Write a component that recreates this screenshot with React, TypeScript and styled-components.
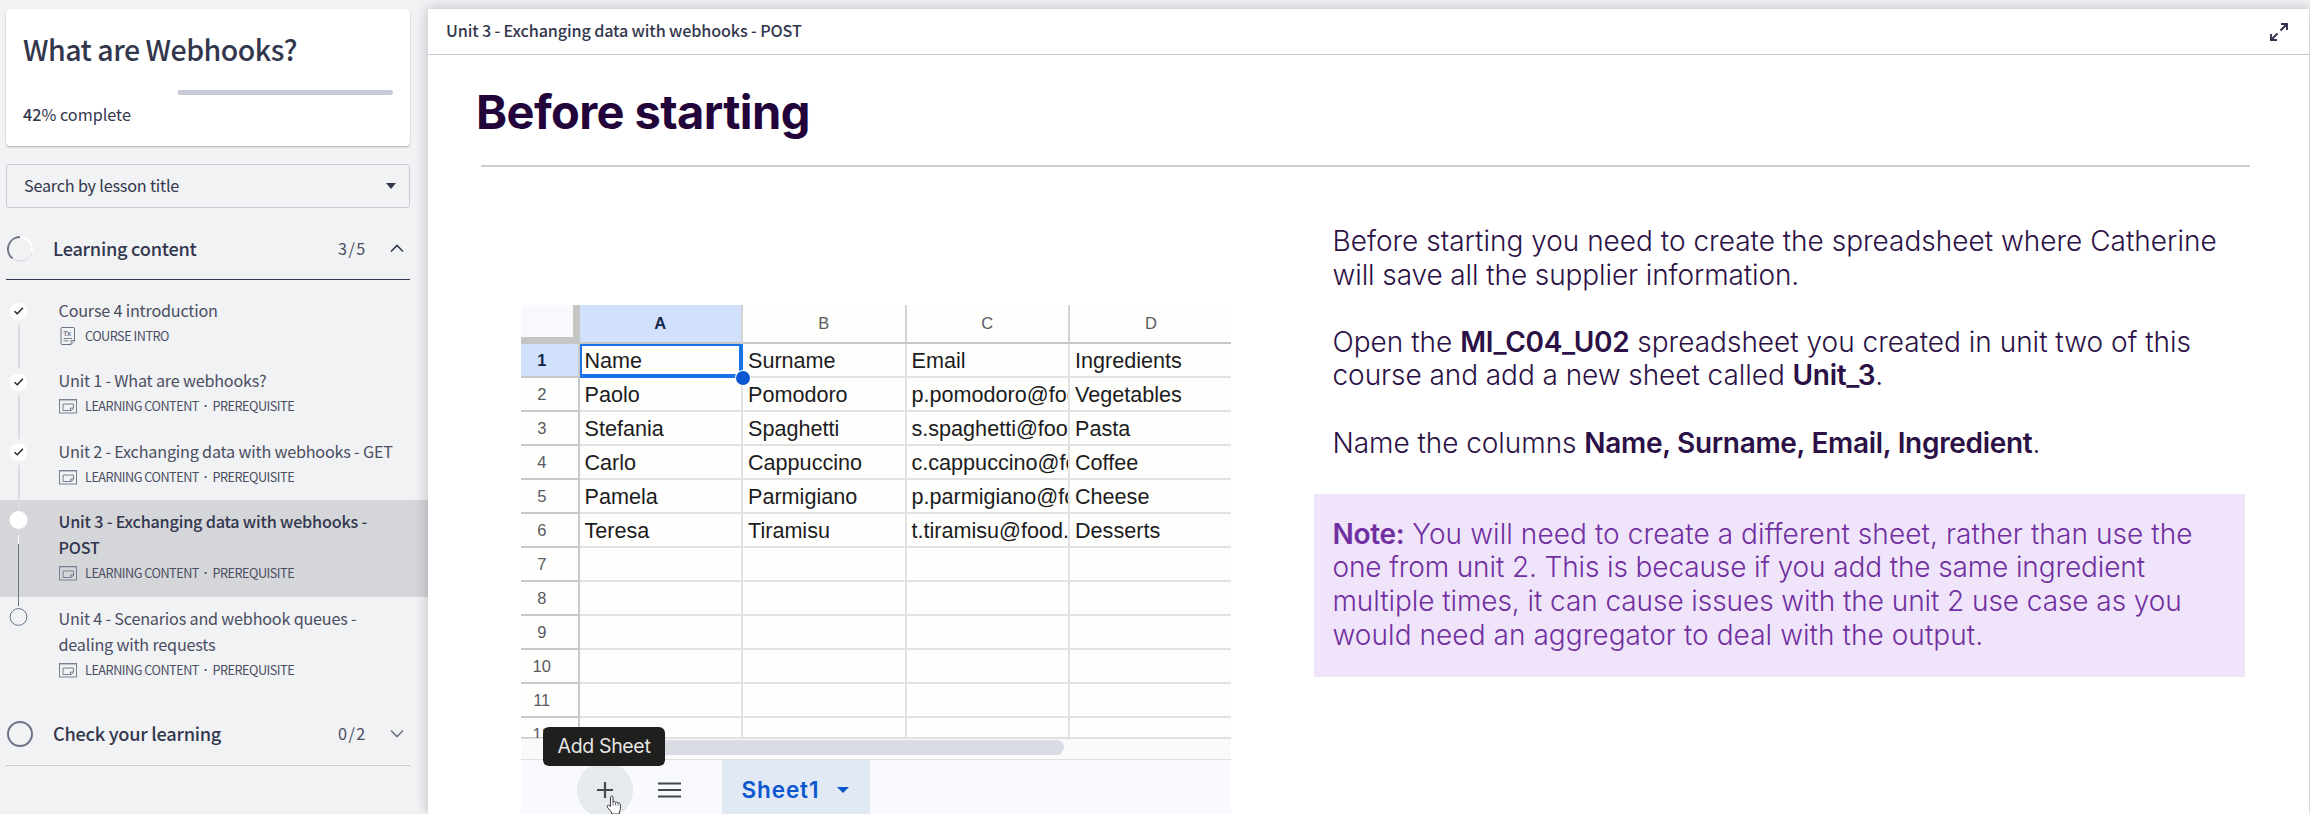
import React from "react";
import styled, { createGlobalStyle } from "styled-components";

const GlobalStyle = createGlobalStyle`
  * { box-sizing: border-box; }
  html, body { margin: 0; padding: 0; height: 814px; overflow: hidden; }
  body { background: #f1f2f4; font-family: "Noto Sans CJK SC", "Noto Sans", sans-serif; color: #33374d; }
  h1, h2, p { margin: 0; font-weight: inherit; }
`;

const Page = styled.div`
  display: flex;
  width: 2310px;
  height: 814px;
  overflow: hidden;
`;

/* ---------- Sidebar ---------- */

const Sidebar = styled.aside`
  width: 428px;
  flex: none;
  padding-top: 9px;
  display: flex;
  flex-direction: column;
`;

const CourseCard = styled.section`
  margin: 0 18px 0 6px;
  height: 137px;
  padding: 19px 17px 0 17px;
  background: #fff;
  border-radius: 4px;
  box-shadow: 0 1px 2px rgba(60, 75, 85, 0.4);
`;

const CourseTitle = styled.h1`
  font-size: 28.5px;
  line-height: 42px;
  font-weight: 500;
  letter-spacing: -0.5px;
  white-space: nowrap;
`;

const ProgressTrack = styled.div`
  display: flex;
  justify-content: flex-end;
  height: 5px;
  margin-top: 20px;
  border-radius: 3px;
  overflow: hidden;
`;

const ProgressRemaining = styled.div`
  width: 215px;
  background: #c8cbd6;
`;

const ProgressText = styled.p`
  margin-top: 6px;
  font-size: 16.2px;
  line-height: 26px;
  white-space: nowrap;
  b { font-weight: 500; }
`;

const SearchBox = styled.div`
  margin: 18px 18px 0 6px;
  height: 44px;
  padding: 0 13px 2px 17px;
  border: 1px solid #c7cad6;
  border-radius: 4px;
  display: flex;
  align-items: center;
  justify-content: space-between;
  font-size: 16.2px;
  line-height: 26px;
  letter-spacing: -0.2px;
  svg { position: relative; top: 1px; }
`;

const SectionHeader = styled.div<{ $open?: boolean }>`
  margin: ${(p) => (p.$open ? "10px 18px 8px 6px" : "10px 18px 0 6px")};
  height: 62px;
  border-bottom: 1px solid ${(p) => (p.$open ? "#33374d" : "#c8cacd")};
  display: flex;
  align-items: center;
`;

const SectionTitle = styled.h2`
  margin: -2px 0 0 19px;
  flex: 1;
  font-size: 18.2px;
  line-height: 28px;
  font-weight: 500;
  letter-spacing: -0.25px;
`;

const SectionCount = styled.span`
  width: 52px;
  margin-top: -2px;
  font-size: 16.2px;
  line-height: 28px;
  letter-spacing: 1.4px;
  color: #4b4e62;
`;

const Chevron = styled.svg`
  width: 14px;
  height: 9px;
  margin: -1px 6px 0 0;
  display: block;
`;

const Lesson = styled.div<{ $active?: boolean; $lines?: number }>`
  display: flex;
  height: ${(p) => (p.$lines === 2 ? 97 : 70.67)}px;
  background: ${(p) => (p.$active ? "#d5d6da" : "transparent")};
`;

const LessonRail = styled.svg`
  display: block;
  flex: none;
  width: 58.5px;
  height: 110px;
  overflow: visible;
  z-index: 1;
`;

const LessonBody = styled.div`
  padding-top: 8.5px;
`;

const LessonTitle = styled.div<{ $active?: boolean }>`
  font-size: 16.2px;
  line-height: 26px;
  letter-spacing: -0.2px;
  font-weight: ${(p) => (p.$active ? 500 : 400)};
  color: ${(p) => (p.$active ? "#33374d" : "#4b4e62")};
  white-space: pre;
`;

const LessonMeta = styled.div`
  display: flex;
  align-items: center;
  height: 26px;
  font-size: 12.7px;
  line-height: 26px;
  letter-spacing: -0.5px;
  color: #4b4e62;
  white-space: pre;
`;

const MetaDot = styled.span`
  width: 13.5px;
  text-align: center;
  font-family: "Liberation Sans", sans-serif;
  font-weight: 700;
`;

const MetaIcon = styled.svg`
  display: block;
  width: 18px;
  height: 20px;
  margin-right: 8.5px;
`;

/* ---------- Main panel ---------- */

const Panel = styled.main`
  flex: none;
  width: 1881px;
  height: 805px;
  margin-top: 9px;
  background: #fff;
  box-shadow: 0 0 12px rgba(30, 30, 40, 0.27);
`;

const PanelHeader = styled.header`
  height: 46px;
  padding: 0 21px 0 18px;
  border-bottom: 1px solid #c7c9d3;
  display: flex;
  align-items: center;
  justify-content: space-between;
  font-size: 16.2px;
  line-height: 26px;
`;

const PanelTitle = styled.span`
  margin-top: -4px;
  font-weight: 500;
  letter-spacing: -0.15px;
`;

const Slide = styled.div`
  padding: 27px 59px 0 51px;
`;

const SlideHeading = styled.h1`
  margin-left: -3px;
  font-family: Inter, sans-serif;
  font-weight: 700;
  font-size: 47px;
  line-height: 60px;
  letter-spacing: -0.6px;
  color: #22043a;
  white-space: nowrap;
`;

const Divider = styled.div`
  height: 2px;
  margin: 23px 0 0 2px;
  background: #d1cac9;
`;

const SlideColumns = styled.div`
  display: flex;
  align-items: flex-start;
`;

const Copy = styled.div`
  margin: 58px 0 0 83px;
  width: 931px;
  font-family: Inter, sans-serif;
  font-weight: 300;
  font-size: 28px;
  line-height: 33.6px;
  color: #2b1145;
  b { font-weight: 600; letter-spacing: -0.3px; }
`;

const Paragraph = styled.p`
  margin: 0 0 33.6px 18.5px;
  white-space: nowrap;
`;

const Note = styled.div`
  margin-top: 33px;
  height: 183px;
  padding: 24px 0 0 18.5px;
  background: #f0e4fb;
  color: #7030a0;
  white-space: nowrap;
`;

const Line = styled.span<{ $spacing?: number }>`
  display: block;
  letter-spacing: ${(p) => p.$spacing ?? 0}px;
`;

/* ---------- Spreadsheet ---------- */

const Sheet = styled.div`
  position: relative;
  margin: 138px 0 0 42px;
  width: 710px;
  height: 509px;
  overflow: hidden;
  background: #fefefc;
  font-family: "Liberation Sans", Arial, sans-serif;
`;

const Grid = styled.div`
  display: grid;
  grid-template-columns: 58.5px 163.5px 163.5px 163.5px 164px;
  grid-template-rows: 38.5px repeat(11, 34px) 21px;
  height: 433px;
  overflow: hidden;
`;

const Corner = styled.div`
  background: #f8f9fd;
  border-right: 7px solid #c5c5c3;
  border-bottom: 7px solid #c5c5c3;
`;

const ColHead = styled.div<{ $on?: boolean }>`
  display: flex;
  align-items: center;
  justify-content: center;
  padding-right: 0;
  font-size: 16.5px;
  font-weight: ${(p) => (p.$on ? 700 : 400)};
  color: ${(p) => (p.$on ? "#12294d" : "#575b5f")};
  background: ${(p) => (p.$on ? "#d2e1fb" : "transparent")};
  border-right: 2px solid #d3d3d2;
  border-bottom: 2px solid #c6c6c5;
`;

const RowHead = styled.div<{ $on?: boolean }>`
  padding: 1px 15px 0 0;
  font-size: 16.5px;
  line-height: 30px;
  text-align: center;
  font-weight: ${(p) => (p.$on ? 700 : 400)};
  color: ${(p) => (p.$on ? "#12294d" : "#575b5f")};
  background: ${(p) => (p.$on ? "#d2e1fb" : "transparent")};
  border-right: 2px solid #cacac9;
  border-bottom: 2px solid #c9c9c8;
`;

const Cell = styled.div<{ $on?: boolean }>`
  padding-left: 5px;
  font-size: 21.6px;
  line-height: 33px;
  color: #1c1c1e;
  white-space: nowrap;
  overflow: hidden;
  border-right: 2px solid #e2e2e3;
  border-bottom: 2px solid #e2e2e3;
  ${(p) => p.$on && "box-shadow: inset 0 0 0 2px #1a73e8; border-color: #1a73e8;"}
`;

const FillHandle = styled.div`
  position: absolute;
  left: 215px;
  top: 66px;
  width: 14px;
  height: 14px;
  border-radius: 50%;
  background: #0b57d0;
  box-shadow: 0 0 0 1px #fff;
`;

const ScrollRow = styled.div`
  height: 22px;
  padding: 1px 167.5px 0 60px;
  background: #fafafb;
  border-top: 1px solid #dfdfe0;
  border-bottom: 1px solid #dfdfe0;
`;

const ScrollThumb = styled.div`
  height: 15px;
  border-radius: 8px;
  background: #dadce4;
`;

const TabBar = styled.div`
  height: 54px;
  display: flex;
  background: #f9fafd;
`;

const AddButton = styled.div`
  width: 56px;
  height: 56px;
  margin: 2px 0 0 56px;
  border-radius: 50%;
  background: #e6eaec;
  display: flex;
  align-items: center;
  justify-content: center;
`;

const ListIcon = styled.svg`
  display: block;
  margin: 22px 0 0 25px;
  flex: none;
`;

const SheetTab = styled.div`
  margin-left: 40.5px;
  width: 148px;
  height: 54px;
  padding: 5px 0 0 20px;
  background: #e1e9f4;
  display: flex;
  align-items: center;
  gap: 18px;
  font-family: Inter, sans-serif;
  font-weight: 600;
  font-size: 22.5px;
  letter-spacing: 0.9px;
  color: #0b57d0;
  svg { flex: none; }
`;

const Tooltip = styled.div`
  position: absolute;
  left: 22px;
  top: 422px;
  width: 122px;
  height: 39px;
  border-radius: 6px;
  background: #1f1f1d;
  color: #e6e6e4;
  font-family: Inter, sans-serif;
  font-size: 19.5px;
  line-height: 39px;
  letter-spacing: -0.35px;
  text-align: center;
`;

const HandCursor = styled.svg`
  position: absolute;
  left: 85px;
  top: 490px;
`;

/* ---------- Data ---------- */

type LessonData = {
  title: string[];
  kind: "intro" | "content";
  state: "done" | "current" | "todo";
};

const lessons: LessonData[] = [
  { title: ["Course 4 introduction"], kind: "intro", state: "done" },
  { title: ["Unit 1 - What are webhooks?"], kind: "content", state: "done" },
  { title: ["Unit 2 - Exchanging data with webhooks - GET"], kind: "content", state: "done" },
  { title: ["Unit 3 - Exchanging data with webhooks -", "POST"], kind: "content", state: "current" },
  { title: ["Unit 4 - Scenarios and webhook queues -", "dealing with requests"], kind: "content", state: "todo" },
];

const rows: string[][] = [
  ["Name", "Surname", "Email", "Ingredients"],
  ["Paolo", "Pomodoro", "p.pomodoro@foo", "Vegetables"],
  ["Stefania", "Spaghetti", "s.spaghetti@foo", "Pasta"],
  ["Carlo", "Cappuccino", "c.cappuccino@fo", "Coffee"],
  ["Pamela", "Parmigiano", "p.parmigiano@fo", "Cheese"],
  ["Teresa", "Tiramisu", "t.tiramisu@food.", "Desserts"],
];

const rowNumbers = Array.from({ length: 12 }, (_, i) => i);

/* ---------- Parts ---------- */

function Rail({ state }: { state: LessonData["state"] }) {
  return (
    <LessonRail viewBox="0 0 58.5 110">
      {state === "done" && (
        <>
          <circle cx="18.5" cy="23.3" r="8.8" fill="#fff" />
          <path d="M14.5 23.2l2.800 2.600 5.600-6" fill="none" stroke="#26262b" strokeWidth="1.500" />
          <path d="M19 36v44" stroke="#dcdde0" strokeWidth="2" />
        </>
      )}
      {state === "current" && (
        <>
          <circle cx="18.5" cy="20" r="9" fill="#fff" />
          <path d="M18.5 35v9" stroke="#fff" strokeWidth="1" />
          <path d="M18.5 44v62" stroke="#6f7287" strokeWidth="1" />
        </>
      )}
      {state === "todo" && <circle cx="18.5" cy="20" r="8.4" fill="none" stroke="#6f7287" strokeWidth="1" />}
    </LessonRail>
  );
}

function KindIcon({ kind }: { kind: LessonData["kind"] }) {
  if (kind === "intro") {
    return (
      <MetaIcon viewBox="0 0 18 20" fill="none" stroke="#6f7287" strokeWidth="1">
        <path d="M3 1.500h11.500a1 1 0 0 1 1 1v12.500l-3.500 3.500h-9a1 1 0 0 1-1-1v-15a1 1 0 0 1 1-1z" />
        <path d="M15.500 14.500h-3.500v4M4.500 12.500h8.500M4.500 14.800h5" strokeWidth="0.900" />
        <text x="4.300" y="9.800" fontSize="7" fontWeight="700" fontFamily="Liberation Sans" fill="#6f7287" stroke="none">
          Tx
        </text>
      </MetaIcon>
    );
  }
  return (
    <MetaIcon viewBox="0 0 18 20" fill="none" stroke="#7b7e92" strokeWidth="1">
      <rect x="0" y="3" width="18" height="2" fill="#bfc1cb" stroke="none" />
      <rect x="0.500" y="3.500" width="17" height="13.500" />
      <path d="M14.500 8v4.500l-2.500 2h-8v-6.500z" />
      <path d="M11.500 14.500v-2.500h3" />
    </MetaIcon>
  );
}

export default function App() {
  return (
    <>
      <GlobalStyle />
      <Page>
        <Sidebar>
          <CourseCard>
            <CourseTitle>What are Webhooks?</CourseTitle>
            <ProgressTrack>
              <ProgressRemaining />
            </ProgressTrack>
            <ProgressText>
              <b>42</b>% complete
            </ProgressText>
          </CourseCard>
          <SearchBox>
            <span>Search by lesson title</span>
            <svg width="10" height="6" viewBox="0 0 10 6">
              <path d="M0 0h10l-5 6z" fill="#33374d" />
            </svg>
          </SearchBox>

          <SectionHeader $open>
            <svg width="28" height="28" viewBox="0 0 28 28" fill="none" strokeWidth="2">
              <circle cx="14" cy="14" r="12" stroke="#fff" />
              <path d="M14 2a12 12 0 0 0-7.500 21.400" stroke="#6f7287" />
              <path d="M6.500 23.400a12.500 12.500 0 0 0 19.500-6" stroke="#b9bbc6" strokeWidth="0.800" />
            </svg>
            <SectionTitle>Learning content</SectionTitle>
            <SectionCount>3/5</SectionCount>
            <Chevron viewBox="0 0 14 9">
              <path d="M1 7.500l6-6 6 6" fill="none" stroke="#33374d" strokeWidth="1.600" />
            </Chevron>
          </SectionHeader>

          {lessons.map((l) => (
            <Lesson key={l.title[0]} $active={l.state === "current"} $lines={l.title.length}>
              <Rail state={l.state} />
              <LessonBody>
                {l.title.map((t) => (
                  <LessonTitle key={t} $active={l.state === "current"}>
                    {t}
                  </LessonTitle>
                ))}
                <LessonMeta>
                  <KindIcon kind={l.kind} />
                  {l.kind === "intro" ? (
                    "COURSE INTRO"
                  ) : (
                    <>
                      <span>LEARNING CONTENT</span>
                      <MetaDot>·</MetaDot>
                      <span>PREREQUISITE</span>
                    </>
                  )}
                </LessonMeta>
              </LessonBody>
            </Lesson>
          ))}

          <SectionHeader>
            <svg width="28" height="28" viewBox="0 0 28 28">
              <circle cx="14" cy="14" r="12" fill="none" stroke="#6f7287" strokeWidth="2" />
            </svg>
            <SectionTitle>Check your learning</SectionTitle>
            <SectionCount>0/2</SectionCount>
            <Chevron viewBox="0 0 14 9">
              <path d="M1 1.500l6 6 6-6" fill="none" stroke="#6f7287" strokeWidth="1.600" />
            </Chevron>
          </SectionHeader>
        </Sidebar>

        <Panel>
          <PanelHeader>
            <PanelTitle>Unit 3 - Exchanging data with webhooks - POST</PanelTitle>
            <svg width="18" height="18" viewBox="0 0 18 18" fill="none" stroke="#33304f" strokeWidth="1.900">
              <path d="M11 1h6v6M17 1l-6.500 6.500M7 17h-6v-6M1 17l6.500-6.500" />
            </svg>
          </PanelHeader>
          <Slide>
            <SlideHeading>Before starting</SlideHeading>
            <Divider />
            <SlideColumns>
              <Sheet>
                <Grid>
                  <Corner />
                  {["A", "B", "C", "D"].map((c, i) => (
                    <ColHead key={c} $on={i === 0}>
                      {c}
                    </ColHead>
                  ))}
                  {rowNumbers.map((r) => (
                    <React.Fragment key={r}>
                      <RowHead $on={r === 0}>{r + 1}</RowHead>
                      {[0, 1, 2, 3].map((c) => (
                        <Cell key={c} $on={r === 0 && c === 0}>
                          {rows[r]?.[c] ?? ""}
                        </Cell>
                      ))}
                    </React.Fragment>
                  ))}
                </Grid>
                <ScrollRow>
                  <ScrollThumb />
                </ScrollRow>
                <TabBar>
                  <AddButton>
                    <svg width="16" height="16" viewBox="0 0 16 16">
                      <path d="M8 0v16M0 8h16" stroke="#44484b" strokeWidth="2.200" />
                    </svg>
                  </AddButton>
                  <ListIcon width="23" height="16" viewBox="0 0 23 16">
                    <path d="M0 1.500h23M0 8h23M0 14.500h23" stroke="#44484b" strokeWidth="2.200" />
                  </ListIcon>
                  <SheetTab>
                    <span>Sheet1</span>
                    <svg width="12" height="6" viewBox="0 0 12 6">
                      <path d="M0 0h12l-6 6z" fill="#0b57d0" />
                    </svg>
                  </SheetTab>
                </TabBar>
                <FillHandle />
                <Tooltip>Add Sheet</Tooltip>
                <HandCursor width="16" height="20" viewBox="0 0 16 20">
                  <path
                    d="M4.500 11.500V2.200c0-1.600 2.500-1.600 2.500 0V7c.8-.8 2.300-.6 2.600.4.900-.6 2.100-.2 2.400.7 1-.4 2.400.1 2.400 1.400v4c0 1.800-1 2.700-1.200 4.500v1H5.800v-1C5 16.500 2.800 14.300 1.300 12c-.8-1.400.8-2.400 1.900-1.500z"
                    fill="#fff"
                    stroke="#3c3c44"
                    strokeWidth="1"
                  />
                  <path d="M7 7v3.500M9.600 7.500v3M12 8.200v2.500" stroke="#3c3c44" strokeWidth="0.800" />
                </HandCursor>
              </Sheet>

              <Copy>
                <Paragraph>
                  <Line>Before starting you need to create the spreadsheet where Catherine</Line>
                  <Line $spacing={-0.1}>will save all the supplier information.</Line>
                </Paragraph>
                <Paragraph>
                  <Line>
                    Open the <b>MI_C04_U02</b> spreadsheet you created in unit two of this
                  </Line>
                  <Line $spacing={-0.06}>
                    course and add a new sheet called <b>Unit_3</b>.
                  </Line>
                </Paragraph>
                <Paragraph>
                  <Line $spacing={-0.05}>
                    Name the columns <b>Name, Surname, Email, Ingredient</b>.
                  </Line>
                </Paragraph>
                <Note>
                  <Line $spacing={0.08}>
                    <b>Note:</b> You will need to create a different sheet, rather than use the
                  </Line>
                  <Line $spacing={-0.12}>one from unit 2. This is because if you add the same ingredient</Line>
                  <Line $spacing={-0.07}>multiple times, it can cause issues with the unit 2 use case as you</Line>
                  <Line $spacing={0.06}>would need an aggregator to deal with the output.</Line>
                </Note>
              </Copy>
            </SlideColumns>
          </Slide>
        </Panel>
      </Page>
    </>
  );
}
